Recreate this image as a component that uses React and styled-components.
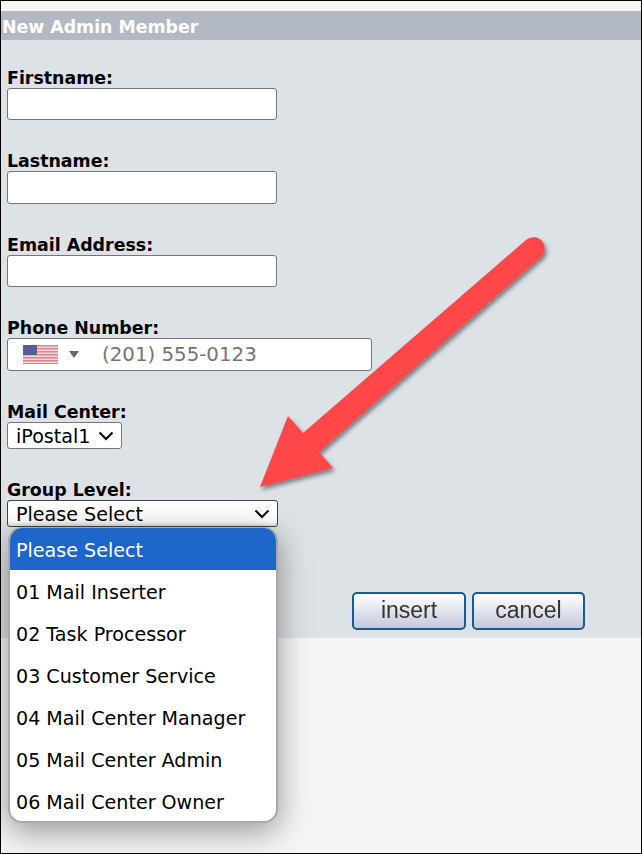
import React from 'react';
import styled, { createGlobalStyle } from 'styled-components';

const GlobalStyle = createGlobalStyle`
    html, body {
        margin: 0;
        padding: 0;
    }
    body {
        background: #f5f5f3;
        font-family: "DejaVu Sans", Verdana, sans-serif;
    }
`

const groups = [
    'Please Select',
    '01 Mail Inserter',
    '02 Task Processor',
    '03 Customer Service',
    '04 Mail Center Manager',
    '05 Mail Center Admin',
    '06 Mail Center Owner',
];

const Chevron = () => (
    <svg width="16" height="10" viewBox="0 0 16 10" fill="none">
        <path d="M1.5 1.5 L8 8 L14.5 1.5" stroke="#000" strokeWidth="2" />
    </svg>
);

const Flag = () => (
    <svg width="35" height="19" viewBox="0 0 35 19">
        <rect width="35" height="19" fill="#f3dcdd" />
        {[0, 3, 6, 9, 12, 15, 18].map((y) => (
            <rect key={y} y={y} width="35" height="1.5" fill="#dc8288" />
        ))}
        <rect width="14" height="10" fill="#5a5c92" />
    </svg>
);

const Arrow = () => (
    <ArrowSvg width="320" height="280" viewBox="0 0 320 280">
        <defs>
            <filter id="arrowShadow" x="-10%" y="-10%" width="120%" height="120%">
                <feDropShadow dx="2" dy="3" stdDeviation="2" floodColor="#000" floodOpacity="0.45" />
            </filter>
        </defs>
        {/* drawn in page coords, shifted by the svg offset */}
        <g transform="translate(-240 -225)" filter="url(#arrowShadow)">
            <path
                d="M260 487 L288 416 L303 433 L526 240 A11 11 0 0 1 541 257 L319 452 L333 468 Z"
                fill="#ff4648"
            />
        </g>
    </ArrowSvg>
);

const App = () => {
    return (
        <Page>
            <GlobalStyle />
            <TopStrip />
            <Header>New Admin Member</Header>
            <Panel>
                <Field $top={28}>
                    <Label>Firstname:</Label>
                    <TextBox />
                </Field>
                <Field $top={31}>
                    <Label>Lastname:</Label>
                    <TextBox $height={33} />
                </Field>
                <Field $top={31}>
                    <Label>Email Address:</Label>
                    <TextBox />
                </Field>
                <Field $top={31}>
                    <Label>Phone Number:</Label>
                    <PhoneBox>
                        <Flag />
                        <Caret />
                        <Placeholder>(201) 555-0123</Placeholder>
                    </PhoneBox>
                </Field>
                <Field $top={31}>
                    <Label>Mail Center:</Label>
                    <SelectBox $width={115}>
                        <SelectText>iPostal1</SelectText>
                        <Chevron />
                    </SelectBox>
                </Field>
                <Field $top={31}>
                    <Label>Group Level:</Label>
                    <SelectBox $width={271} $open>
                        <SelectText>Please Select</SelectText>
                        <Chevron />
                    </SelectBox>
                </Field>
                <Buttons>
                    <Button $width={114}><ButtonText>insert</ButtonText></Button>
                    <Button $width={113}><ButtonText>cancel</ButtonText></Button>
                </Buttons>
            </Panel>
            <Dropdown>
                {groups.map((g, i) => (
                    <Option key={g} $active={i === 0}>{g}</Option>
                ))}
            </Dropdown>
            <Arrow />
        </Page>
    );
}

export default App;

const Page = styled.div`
    position: relative;
    width: 642px;
    height: 854px;
    box-sizing: border-box;
    overflow: hidden;
    border: 1px solid #000;
    background: #f5f5f3;
`
const TopStrip = styled.div`
    height: 10px;
`
const Header = styled.div`
    height: 29px;
    line-height: 33px;
    padding-left: 1px;
    background: #b3b9c3;
    color: #fff;
    font-size: 17.33px;
    font-weight: bold;
`
const Panel = styled.div`
    height: 598px;
    box-sizing: border-box;
    padding-left: 6px;
    overflow: hidden;
    background: #dde2e6;
`
const Field = styled.div`
    margin-top: ${(p) => p.$top}px;
`
const Label = styled.div`
    height: 20px;
    line-height: 21px;
    font-size: 17.4px;
    font-weight: bold;
    color: #000;
`
const TextBox = styled.div`
    width: 270px;
    height: ${(p) => p.$height || 32}px;
    box-sizing: border-box;
    background: #fff;
    border: 1px solid #767676;
    border-radius: 3px;
`
const PhoneBox = styled.div`
    width: 365px;
    height: 33px;
    box-sizing: border-box;
    display: flex;
    align-items: center;
    padding-left: 15px;
    background: #fff;
    border: 1px solid #767676;
    border-radius: 3px;
`
const Caret = styled.span`
    width: 0;
    height: 0;
    margin-left: 11px;
    border-left: 5px solid transparent;
    border-right: 5px solid transparent;
    border-top: 7px solid #666;
`
const Placeholder = styled.span`
    margin-left: 23px;
    font-size: 19.8px;
    color: #757575;
`
const SelectBox = styled.div`
    width: ${(p) => p.$width}px;
    height: 27px;
    box-sizing: border-box;
    display: flex;
    align-items: center;
    justify-content: space-between;
    padding: 0 7px 0 8px;
    background: #fff;
    border: 1px solid #767676;
    border-radius: 3px;
    ${(p) => p.$open && 'border-color: #444; box-shadow: inset 0 -4px 4px -3px #ccc;'}
`
const SelectText = styled.span`
    margin-top: 2px;
    font-size: 19.1px;
    color: #000;
`
const Buttons = styled.div`
    display: flex;
    gap: 6px;
    margin-top: 65px;
    margin-left: 345px;
`
const Button = styled.div`
    width: ${(p) => p.$width}px;
    height: 38px;
    box-sizing: border-box;
    display: flex;
    align-items: center;
    justify-content: center;
    padding-bottom: 2px;
    border: 2px solid #1c5a8a;
    border-radius: 5px;
    background: linear-gradient(#ffffff, #c6c7dc);
`
const ButtonText = styled.span`
    font-family: "Liberation Sans", Arial, sans-serif;
    font-size: 23px;
    color: #333;
    filter: blur(0.4px);
`
const Dropdown = styled.div`
    position: absolute;
    left: 7px;
    top: 526px;
    width: 270px;
    height: 296px;
    box-sizing: border-box;
    overflow: hidden;
    background: #fff;
    border: 2px solid #a9a9a9;
    border-top-width: 1px;
    border-radius: 14px;
    box-shadow: 0 8px 32px rgba(0, 0, 0, 0.4);
`
const Option = styled.div`
    height: 42px;
    line-height: 46px;
    padding-left: 6px;
    font-size: 19.1px;
    color: ${(p) => (p.$active ? '#fff' : '#000')};
    background: ${(p) => (p.$active ? '#1f66cb' : 'transparent')};
`
const ArrowSvg = styled.svg`
    position: absolute;
    left: 239px;
    top: 224px;
`
